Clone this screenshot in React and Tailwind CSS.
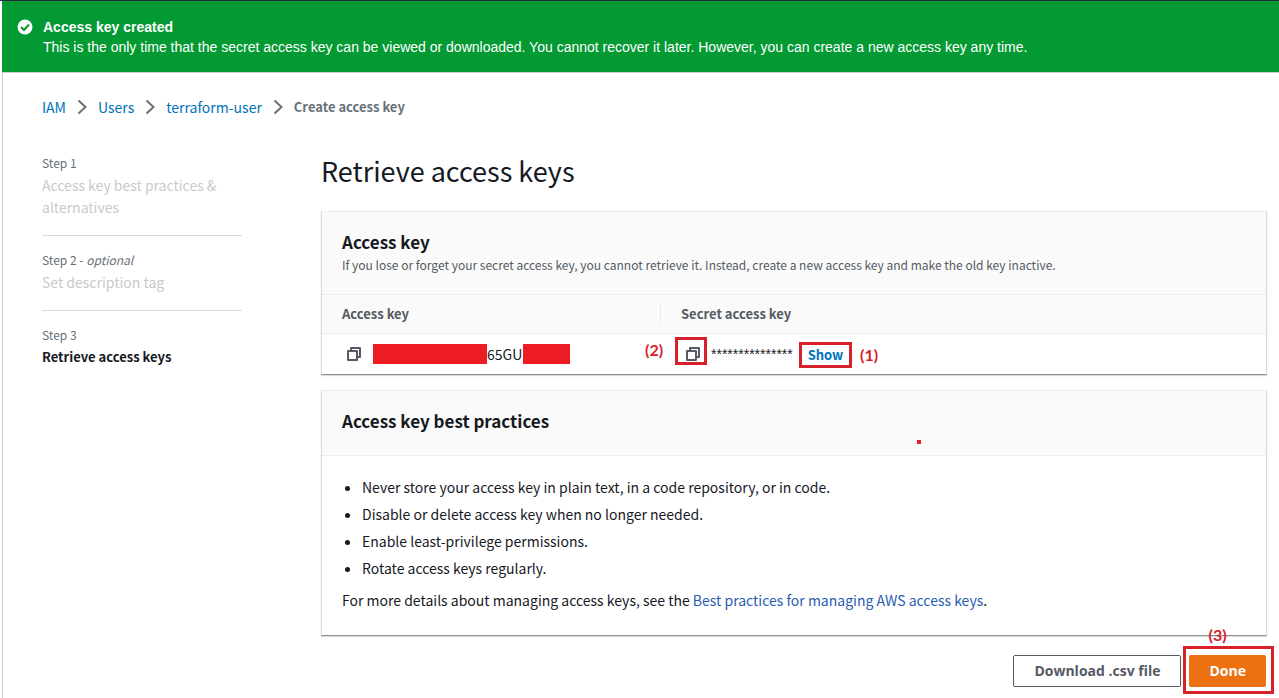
function Chevron() {
  return (
    <svg className="mx-[11px] h-4 w-[10px] shrink-0" viewBox="0 0 10 16" fill="none" stroke="#687078" strokeWidth="2" aria-hidden="true">
      <path d="M1.500 1.500 8.500 8l-7 6.500" />
    </svg>
  );
}

function CopyIcon() {
  return (
    <svg className="h-4 w-4" viewBox="0 0 16 16" fill="none" stroke="#545b64" strokeWidth="2" strokeLinejoin="round" aria-hidden="true">
      <path d="M2 5h9v9H2z" />
      <path d="M5 5V2h9v9h-3" />
    </svg>
  );
}

function Breadcrumbs() {
  return (
    <nav aria-label="Breadcrumbs" className="flex h-[22px] items-center">
      <a href="#iam" className="text-[#0073bb]">IAM</a>
      <Chevron />
      <a href="#users" className="text-[#0073bb]">Users</a>
      <Chevron />
      <a href="#terraform-user" className="text-[#0073bb]">terraform-user</a>
      <Chevron />
      <span className="text-[13px] font-bold text-[#687078]">Create access key</span>
    </nav>
  );
}

function Step({ label, optional, title, active, last }) {
  return (
    <li className={last ? '' : 'mb-[14px] border-b border-[#d5dbdb] pb-[17px]'}>
      <div className="text-xs leading-5 text-[#687078]">
        {label}
        {optional && <> - <em>optional</em></>}
      </div>
      <div className={active ? 'mt-px text-[13px] font-bold text-[#16191f]' : 'mt-px text-[#c6cacd]'}>{title}</div>
    </li>
  );
}

function Card({ children }) {
  return (
    <section className="border border-t-[#eaeded] border-r-[#d5dbdb] border-b-[#879196] border-l-[#d5dbdb] bg-white shadow-[0_1px_1px_rgba(0,28,36,0.15)]">
      {children}
    </section>
  );
}

export default function App() {
  return (
    <div className="min-h-screen border-t border-[#232f3e] bg-white pl-[2px] font-['Noto_Sans_CJK_SC','Noto_Sans',sans-serif] text-[14px] leading-[22px] text-[#16191f]">
      <div role="status" className="flex gap-[10px] bg-[#039a33] pt-4 pr-4 pb-[15px] pl-[15px] font-['Liberation_Sans',Arial,sans-serif] text-white">
        <svg className="mt-[2px] h-4 w-4 shrink-0" viewBox="0 0 16 16" aria-hidden="true">
          <circle cx="8" cy="8" r="7.500" fill="#fff" />
          <path d="m4 8 3 3 5-5.500" fill="none" stroke="#039a33" strokeWidth="2" />
        </svg>
        <div className="leading-5">
          <div className="font-bold">Access key created</div>
          <div>This is the only time that the secret access key can be viewed or downloaded. You cannot recover it later. However, you can create a new access key any time.</div>
        </div>
      </div>

      <div className="border-t border-l border-[#c9cfcf] pt-[23px] pr-3 pb-[11px] pl-[39px]">
        <Breadcrumbs />

        <div className="mt-[35px] flex">
          <aside className="mr-[79px] w-[200px] shrink-0">
            <ol>
              <Step label="Step 1" title="Access key best practices & alternatives" />
              <Step label="Step 2" optional title="Set description tag" />
              <Step label="Step 3" title="Retrieve access keys" active last />
            </ol>
          </aside>

          <main className="min-w-0 flex-1">
            <h1 className="text-[27px] leading-9">Retrieve access keys</h1>

            <div className="mt-[22px] flex flex-col gap-[15px]">
              <Card>
                <header className="bg-[#fafafa] px-5 pt-[18px] pb-[19px]">
                  <h2 className="text-[17px] leading-6 font-bold">Access key</h2>
                  <p className="mt-px text-xs leading-5 text-[#545b64]">
                    If you lose or forget your secret access key, you cannot retrieve it. Instead, create a new access key and make the old key inactive.
                  </p>
                </header>
                <table className="w-full table-fixed border-collapse text-left">
                  <thead>
                    <tr className="h-[39px] border-y border-[#eaeded] bg-[#fafafa] text-[13px] text-[#545b64]">
                      <th scope="col" className="w-[339px] p-0">
                        <div className="border-r border-[#eaeded] pl-5 font-bold">Access key</div>
                      </th>
                      <th scope="col" className="p-0 pl-5 font-bold">Secret access key</th>
                    </tr>
                  </thead>
                  <tbody>
                    <tr className="h-10">
                      <td className="p-0">
                        <div className="flex items-center pl-6">
                          <button type="button" aria-label="Copy access key"><CopyIcon /></button>
                          <span className="ml-[11px] h-5 w-[114px] bg-[#ed1c24]" />
                          <span className="w-9">65GU</span>
                          <span className="h-5 w-[47px] bg-[#ed1c24]" />
                        </div>
                      </td>
                      <td className="p-0">
                        <div className="relative flex items-center pl-6">
                          <span className="absolute -top-1 -left-4 font-[Lato,sans-serif] text-base leading-[22px] font-bold text-[#d8202a]">(2)</span>
                          <span className="absolute -top-[6px] left-[14px] h-7 w-8 border-3 border-[#d8202a]" />
                          <button type="button" aria-label="Copy secret access key"><CopyIcon /></button>
                          <span className="ml-[10px] font-['Liberation_Sans',Arial,sans-serif]">{'*'.repeat(15)}</span>
                          <span className="absolute -top-px left-[138px] flex items-center gap-2">
                            <button type="button" className="h-[26px] w-[53px] border-3 border-[#d8202a] text-[13px] leading-[18px] font-bold text-[#0073bb]">Show</button>
                            <span className="font-[Lato,sans-serif] text-base leading-[22px] font-bold text-[#d8202a]">(1)</span>
                          </span>
                        </div>
                      </td>
                    </tr>
                  </tbody>
                </table>
              </Card>

              <Card>
                <header className="relative border-b border-[#eaeded] bg-[#fafafa] px-5 pt-[18px] pb-[22px]">
                  <h2 className="text-[17px] leading-6 font-bold">Access key best practices</h2>
                  <span className="absolute top-[49px] left-[595px] h-1 w-1 bg-[#ed1c24]" />
                </header>
                <div className="px-5 pt-[18px] pb-6">
                  <ul className="list-disc pl-5 leading-[27px]">
                    <li>Never store your access key in plain text, in a code repository, or in code.</li>
                    <li>Disable or delete access key when no longer needed.</li>
                    <li>Enable least-privilege permissions.</li>
                    <li>Rotate access keys regularly.</li>
                  </ul>
                  <p className="mt-[7px]">
                    For more details about managing access keys, see the{' '}
                    <a href="#best-practices" className="text-[#2a5db0]">Best practices for managing AWS access keys</a>.
                  </p>
                </div>
              </Card>
            </div>

            <div className="mt-[19px] flex justify-end gap-2 pr-px">
              <button type="button" className="h-8 rounded-[2px] border border-[#545b64] px-5 font-['Open_Sans',sans-serif] font-bold text-[#545b64]">Download .csv file</button>
              <div className="relative">
                <span className="absolute -top-[31px] left-[19px] font-[Lato,sans-serif] text-base leading-[22px] font-bold text-[#d8202a]">(3)</span>
                <span className="pointer-events-none absolute -top-[9px] -right-2 -bottom-[7px] -left-[6px] border-3 border-[#d8202a]" />
                <button type="button" className="h-8 rounded-[2px] bg-[#ec7211] px-5 font-['Open_Sans',sans-serif] font-bold text-white">Done</button>
              </div>
            </div>
          </main>
        </div>
      </div>
    </div>
  );
}
